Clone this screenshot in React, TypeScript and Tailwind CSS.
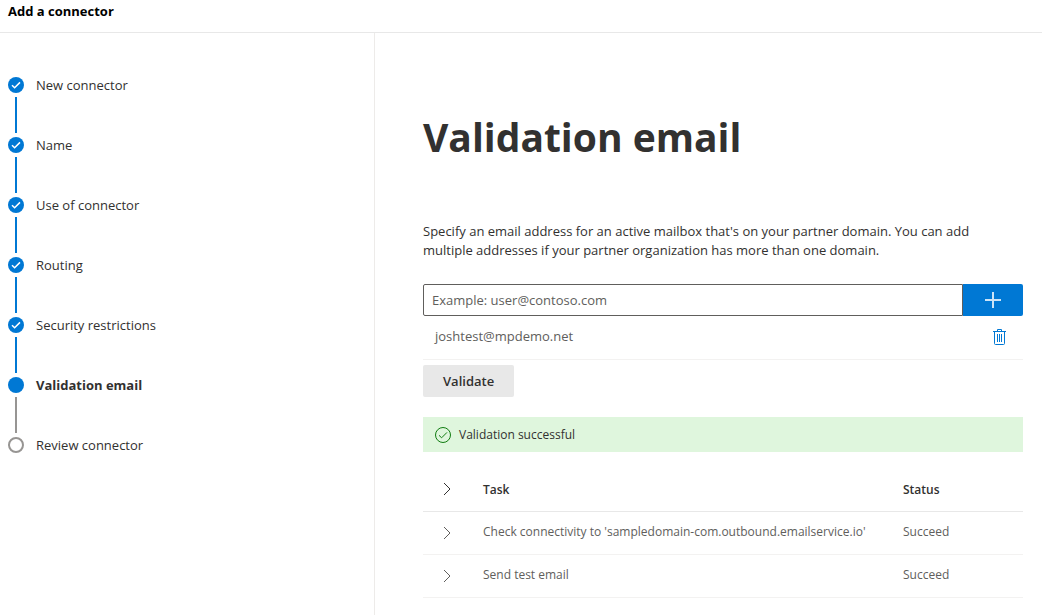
import React, { useState } from 'react';

type StepState = 'done' | 'current' | 'upcoming';

interface Step {
  label: string;
  state: StepState;
}

const steps: Step[] = [
  { label: 'New connector', state: 'done' },
  { label: 'Name', state: 'done' },
  { label: 'Use of connector', state: 'done' },
  { label: 'Routing', state: 'done' },
  { label: 'Security restrictions', state: 'done' },
  { label: 'Validation email', state: 'current' },
  { label: 'Review connector', state: 'upcoming' },
];

const tasks = [
  { name: "Check connectivity to 'sampledomain-com.outbound.emailservice.io'", status: 'Succeed' },
  { name: 'Send test email', status: 'Succeed' },
];

const ChevronIcon: React.FC = () => (
  <svg width="8" height="14" viewBox="0 0 8 14" fill="none" stroke="currentColor" strokeWidth="1">
    <path d="M1 1l6 6-6 6" />
  </svg>
);

const TrashIcon: React.FC = () => (
  <svg width="13" height="16" viewBox="0 0 13 16" fill="none" stroke="currentColor" strokeWidth="1">
    <path d="M0 2.5h13M4.5 2.5v-2h4v2M1.5 2.5v12q0 1 1 1h8q1 0 1-1v-12M4.5 5v8M6.5 5v8M8.5 5v8" />
  </svg>
);

const StepMarker: React.FC<{ state: StepState }> = ({ state }) => {
  if (state === 'upcoming') {
    return <span className="block h-4 w-4 rounded-full border-2 border-[#979593]" />;
  }
  return (
    <span className="flex h-4 w-4 items-center justify-center rounded-full bg-[#0078d4] text-white">
      {state === 'done' && (
        <svg width="16" height="16" viewBox="0 0 16 16" fill="none" stroke="currentColor" strokeWidth="1.5">
          <path d="M4 8.3l2.6 2.5 5.4-5.4" />
        </svg>
      )}
    </span>
  );
};

const StepList: React.FC = () => (
  <ol className="px-2 pt-11">
    {steps.map((step, i) => (
      <li key={step.label} aria-current={step.state === 'current' ? 'step' : undefined} className="flex items-start gap-3">
        <div className="flex flex-col items-center gap-1 pb-1">
          <StepMarker state={step.state} />
          {i < steps.length - 1 && (
            <span className={`h-9 w-0.5 ${step.state === 'done' ? 'bg-[#0078d4]' : 'bg-[#979593]'}`} />
          )}
        </div>
        <span className={`text-[13px] leading-4 ${step.state === 'current' ? 'font-bold' : ''}`}>{step.label}</span>
      </li>
    ))}
  </ol>
);

const App: React.FC = () => {
  const [email, setEmail] = useState('');
  const [addresses, setAddresses] = useState(['joshtest@mpdemo.net']);

  const addAddress = () => {
    if (!email.trim()) return;
    setAddresses(prev => [...prev, email.trim()]);
    setEmail('');
  };

  return (
    <div className="flex min-h-screen flex-col bg-white font-['Open_Sans','Segoe_UI',sans-serif] text-[#323130]">
      <header className="border-b border-[#e8e8e8] px-2 pt-px pb-[11px]">
        <h2 className="text-[13px] leading-5 font-bold text-black">Add a connector</h2>
      </header>

      <div className="flex flex-1">
        <nav aria-label="Steps" className="w-[375px] shrink-0 border-r border-[#edebe9]">
          <StepList />
        </nav>

        <main className="min-w-0 flex-1 pt-18 pr-[19px] pl-12">
          <h1 className="text-[39px] leading-16 font-bold">Validation email</h1>

          <p className="mt-[53px] pr-4 text-[13px] leading-[19px]">
            Specify an email address for an active mailbox that's on your partner domain. You can add multiple addresses if
            your partner organization has more than one domain.
          </p>

          <div className="mt-6 flex h-8">
            <input
              type="email"
              aria-label="Email address"
              value={email}
              onChange={e => setEmail(e.target.value)}
              placeholder="Example: user@contoso.com"
              className="min-w-0 flex-1 rounded-l-xs border border-[#605e5c] px-2 pt-0.5 text-[13px] placeholder:text-[#605e5c]"
            />
            <button
              type="button"
              aria-label="Add email"
              onClick={addAddress}
              className="flex w-15 items-center justify-center rounded-r-xs bg-[#0078d4] text-white"
            >
              <svg width="16" height="16" viewBox="0 0 16 16" fill="none" stroke="currentColor" strokeWidth="2" strokeOpacity="0.8">
                <path d="M8 0v16M0 8h16" />
              </svg>
            </button>
          </div>

          <ul>
            {addresses.map(address => (
              <li
                key={address}
                className="flex h-11 items-center justify-between border-b border-[#f3f2f1] pr-[17px] pb-px pl-3 text-[13px] text-[#605e5c]"
              >
                {address}
                <button
                  type="button"
                  aria-label={`Remove ${address}`}
                  onClick={() => setAddresses(prev => prev.filter(a => a !== address))}
                  className="text-[#0078d4]"
                >
                  <TrashIcon />
                </button>
              </li>
            ))}
          </ul>

          <button type="button" className="mt-[5px] block h-8 rounded-xs bg-[#e8e8e8] px-5 pt-0.5 text-[13px] font-semibold">
            Validate
          </button>

          <div role="status" className="mt-5 flex h-[35px] items-center gap-2 bg-[#dff6dd] px-3 text-xs">
            <svg width="16" height="16" viewBox="0 0 16 16" fill="none" stroke="#107c10" strokeWidth="1">
              <circle cx="8" cy="8" r="7.5" />
              <path d="M4 8.3l2.6 2.5 5.4-5.4" />
            </svg>
            Validation successful
          </div>

          <table className="mt-[15px] w-full table-fixed text-left text-xs">
            <thead>
              <tr className="h-11 border-b border-[#e8e8e8]">
                <th className="w-[60px] pl-5">
                  <button type="button" aria-label="Expand all" className="block">
                    <ChevronIcon />
                  </button>
                </th>
                <th className="pt-0.5 font-semibold">Task</th>
                <th className="w-30 pt-0.5 font-semibold">Status</th>
              </tr>
            </thead>
            <tbody className="text-[#605e5c]">
              {tasks.map(task => (
                <tr key={task.name} className="h-[43px] border-b border-[#f3f2f1]">
                  <td className="pl-5">
                    <button type="button" aria-label={`Expand ${task.name}`} className="block">
                      <ChevronIcon />
                    </button>
                  </td>
                  <td className="truncate pb-0.5">{task.name}</td>
                  <td className="pb-0.5">{task.status}</td>
                </tr>
              ))}
            </tbody>
          </table>
        </main>
      </div>
    </div>
  );
};

export default App;
